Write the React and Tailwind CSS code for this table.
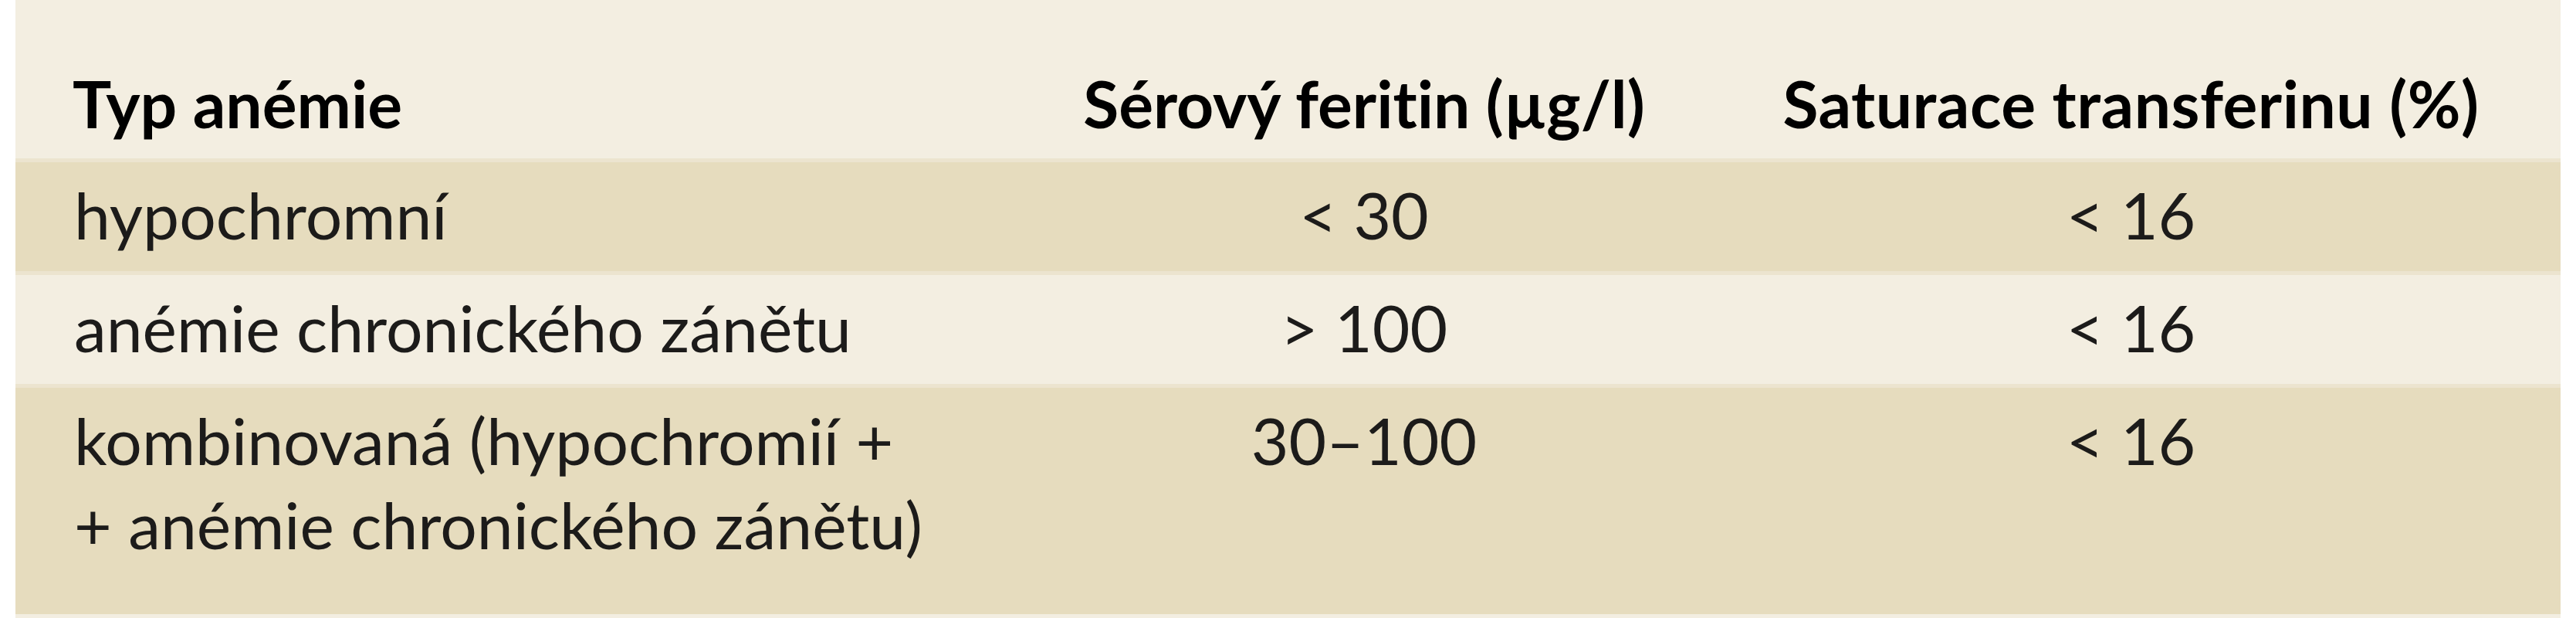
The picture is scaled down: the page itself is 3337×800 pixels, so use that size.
import React from "react";

const rows = [
  { a: ["hypochromní"], b: "< 30", c: "< 16", bg: "bg-[#e6dcbe]", pb: "pb-[19px]" },
  { a: ["anémie chronického zánětu"], b: "> 100", c: "< 16", bg: "bg-[#f3eee1]", pb: "pb-[19px]" },
  {
    a: ["kombinovaná (hypochromií +", "+ anémie chronického zánětu)"],
    b: "30–100",
    c: "< 16",
    bg: "bg-[#e6dcbe]",
    pb: "pb-[62px]",
  },
];

export default function App() {
  return (
    <div className="w-[3337px] h-[800px] bg-white pl-[20px] pr-[20px] font-['Lato',_'Noto_Sans',_sans-serif] [font-variant-ligatures:none]">
      <div className="flex flex-col bg-[#f3eee1] h-[800px]">
        <div className="grid grid-cols-[1310px_874px_1113px] pt-[79px] pb-[17px] text-[84px] leading-[109px] font-bold text-black bg-[#f3eee1]">
          <div className="pl-[74px] whitespace-nowrap">Typ anémie</div>
          <div className="text-center whitespace-nowrap">Sérový feritin (µg/l)</div>
          <div className="text-center whitespace-nowrap tracking-[0.5px]">Saturace transferinu (%)</div>
        </div>
        {rows.map((r, i) => (
          <div key={i} className={`border-t-[5px] border-[#ece4cf] ${r.bg}`}>
            <div className={`grid grid-cols-[1310px_874px_1113px] pt-[13px] ${r.pb} text-[84px] leading-[109px] text-[#1c1b1a]`}>
              <div className="pl-[76px] whitespace-nowrap">
                {r.a.map((line, j) => (
                  <div key={j}>{line}</div>
                ))}
              </div>
              <div className="text-center whitespace-nowrap">
                {r.b === "30–100" ? (
                  <span>
                    30<span className="tracking-[-6px]">–</span>
                    <span className="pl-[6px]">100</span>
                  </span>
                ) : (
                  r.b
                )}
              </div>
              <div className="text-center whitespace-nowrap">{r.c}</div>
            </div>
          </div>
        ))}
      </div>
    </div>
  );
}
